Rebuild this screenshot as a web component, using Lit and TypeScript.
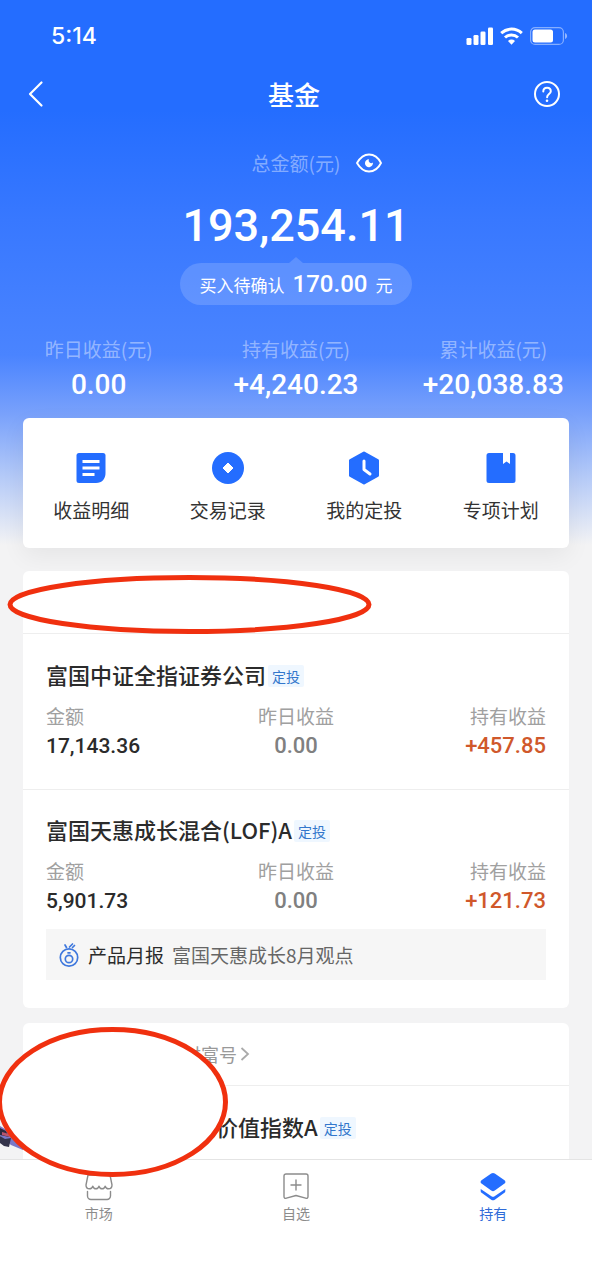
import { LitElement, html, css, svg, nothing } from "lit";
import { customElement, property } from "lit/decorators.js";

interface Fund {
  name: string;
  amount: string;
  yesterday: string;
  holding: string;
  report?: string;
}

const stats = [
  { label: "昨日收益(元)", value: "0.00" },
  { label: "持有收益(元)", value: "+4,240.23" },
  { label: "累计收益(元)", value: "+20,038.83" },
];

const shortcuts = [
  {
    label: "收益明细",
    icon: svg`<path fill="#246dff" d="M6 3h24a2.500 2.500 0 0 1 2.500 2.500V23c0 6-3.500 10-9.500 10H6a2.500 2.500 0 0 1-2.500-2.500v-25A2.500 2.500 0 0 1 6 3z"/><path stroke="#fff" stroke-width="2.800" d="M9.500 11.500h17M9.500 18h17M9.500 24.500h12"/>`,
  },
  {
    label: "交易记录",
    icon: svg`<circle cx="18" cy="18" r="16" fill="#246dff"/><path fill="#fff" stroke="#fff" stroke-width="1" stroke-linejoin="round" d="M18 13l5 5-5 5-5-5z"/>`,
  },
  {
    label: "我的定投",
    icon: svg`<path fill="#246dff" stroke="#246dff" stroke-width="3" stroke-linejoin="round" d="M18 3l13.500 7.500v15L18 33 4.500 25.500v-15z"/><path fill="none" stroke="#fff" stroke-width="3" stroke-linecap="round" stroke-linejoin="round" d="M18 11v8.500l6 4.500"/>`,
  },
  {
    label: "专项计划",
    icon: svg`<path fill="#246dff" d="M6 3h14v11l3.500-2.500L27 14V3h3a2.500 2.500 0 0 1 2.500 2.500v25A2.500 2.500 0 0 1 30 33H6a2.500 2.500 0 0 1-2.500-2.500v-25A2.500 2.500 0 0 1 6 3z"/>`,
  },
];

const funds: Fund[] = [
  { name: "富国中证全指证券公司", amount: "17,143.36", yesterday: "0.00", holding: "+457.85" },
  {
    name: "富国天惠成长混合(LOF)A",
    amount: "5,901.73",
    yesterday: "0.00",
    holding: "+121.73",
    report: "富国天惠成长8月观点",
  },
];

const tabs = [
  {
    label: "市场",
    active: false,
    icon: svg`<g fill="none" stroke="#8c8c8c" stroke-width="1.400" stroke-linecap="round" stroke-linejoin="round"><path d="M3 2h22l2 10c0 2.600-1.800 3.800-3.500 3.800s-2.800-1-3.300-2.600c-.5 1.600-1.600 2.600-3.100 2.600s-2.600-1-3.100-2.600c-.5 1.600-1.600 2.600-3.100 2.600s-2.600-1-3.100-2.600c-.5 1.600-1.600 2.600-3.300 2.600S1 14.600 1 12z"/><path d="M2.500 18.500V23a3.500 3.500 0 0 0 3.500 3.500h16a3.500 3.500 0 0 0 3.500-3.500v-4.500"/></g>`,
  },
  {
    label: "自选",
    active: false,
    icon: svg`<g fill="none" stroke="#8c8c8c" stroke-width="1.400" stroke-linecap="round" stroke-linejoin="round"><path d="M4 1h20a2 2 0 0 1 2 2v20.500c0 1.500-1 2.200-2.400 1.700L14 22.500l-9.600 2.700C3 25.700 2 25 2 23.500V3a2 2 0 0 1 2-2z"/><path d="M14 7v10M9 12h10"/></g>`,
  },
  {
    label: "持有",
    active: true,
    icon: svg`<path fill="#246dff" d="M12.200.6a3.500 3.500 0 0 1 3.600 0l9.700 6.600c1.200.8 1.200 2.600 0 3.400l-9.700 7a3.500 3.500 0 0 1-3.600 0l-9.700-7c-1.200-.8-1.200-2.600 0-3.400z"/><path fill="#246dff" d="M1.700 16v2.200c0 .7.300 1.200.9 1.600l9.600 6.900a3.200 3.200 0 0 0 3.600 0l9.600-6.900c.6-.4.9-.9.9-1.600V16L15.600 23.200a2.900 2.900 0 0 1-3.200 0z"/>`,
  },
];

const shared = css`
  :host {
    display: block;
  }
  svg {
    display: block;
    flex: none;
  }
  .title-row {
    display: flex;
    align-items: center;
    gap: 2px;
    height: 30px;
  }
  .name {
    align-self: flex-start;
    margin: 0;
    font-size: 22px;
    line-height: 26px;
    font-weight: 500;
    color: #2b2b2b;
    white-space: nowrap;
  }
  .tag {
    padding: 0 4px;
    border-radius: 2px;
    background: #eff7ff;
    color: #3377cc;
    font-size: 14px;
    line-height: 22px;
  }
`;

@customElement("fund-item")
export class FundItem extends LitElement {
  @property({ attribute: false }) fund!: Fund;

  static styles = [
    shared,
    css`
      .figures {
        display: grid;
        grid-template-columns: 1fr 1fr 1fr;
        margin: 12px 0 0;
      }
      .figure {
        display: flex;
        flex-direction: column;
        gap: 2px;
      }
      .figure:nth-child(2) {
        align-items: center;
      }
      .figure:nth-child(3) {
        align-items: flex-end;
      }
      dt {
        font-size: 19px;
        line-height: 26px;
        color: #a0a0a0;
      }
      dd {
        margin: 0;
        font-family: Roboto, "Noto Sans CJK SC", sans-serif;
        font-size: 22px;
        line-height: 30px;
        font-weight: 500;
        color: #d0582b;
      }
      .amount {
        font-size: 21px;
        color: #2b2b2b;
      }
      .quiet {
        color: #808080;
      }
      .report {
        display: flex;
        align-items: center;
        height: 51px;
        margin-top: 13px;
        padding: 0 12px;
        background: #f6f6f6;
        font-size: 19px;
        line-height: 26px;
        color: #666;
        text-decoration: none;
        white-space: nowrap;
      }
      .report b {
        margin: 0 8px;
        font-weight: 400;
        color: #2b2b2b;
      }
    `,
  ];

  render() {
    const f = this.fund;
    return html`
      <div class="title-row">
        <h2 class="name">${f.name}</h2>
        <span class="tag">定投</span>
      </div>
      <dl class="figures">
        <div class="figure"><dt>金额</dt><dd class="amount">${f.amount}</dd></div>
        <div class="figure"><dt>昨日收益</dt><dd class="quiet">${f.yesterday}</dd></div>
        <div class="figure"><dt>持有收益</dt><dd>${f.holding}</dd></div>
      </dl>
      ${f.report
        ? html`<a class="report" href="#report">
            <svg width="22" height="26" viewBox="0 0 22 26" fill="none" stroke="#3f78dd" stroke-width="1.700" stroke-linecap="round">
              <circle cx="11" cy="15.500" r="8.700" />
              <circle cx="11" cy="17" r="3.700" />
              <path d="M10 10.800h2M8.500 5.500L7 3M11.500 5l3-3M14.500 5.500l2-2" />
            </svg>
            <b>产品月报</b><span>${f.report}</span>
          </a>`
        : nothing}
    `;
  }
}

@customElement("app-root")
export class AppRoot extends LitElement {
  static styles = [
    shared,
    css`
      :host {
        position: relative;
        display: flex;
        flex-direction: column;
        height: 100vh;
        overflow: hidden;
        background: #f3f3f4;
        font-family: "Noto Sans CJK SC", sans-serif;
        color: #333;
      }
      button {
        padding: 0;
        border: 0;
        background: none;
        font: inherit;
        color: inherit;
      }
      .page {
        flex: 1;
        min-height: 0;
        overflow: hidden;
        background: linear-gradient(
            #246dff 0,
            #246dff 110px,
            #3878ff 220px,
            #4a84ff 355px,
            #7aa2fb 415px,
            #b3c9f8 475px,
            #f3f3f4 545px
          )
          no-repeat;
      }
      .status {
        display: flex;
        align-items: center;
        justify-content: space-between;
        height: 72px;
        padding: 0 24px 0 51px;
        color: #fff;
        font-family: Inter, sans-serif;
        font-size: 23px;
        font-weight: 500;
      }
      .nav {
        display: flex;
        align-items: center;
        justify-content: space-between;
        height: 44px;
        padding: 0 31px 0 27px;
        color: #fff;
      }
      .nav h1 {
        margin: 0;
        font-size: 26px;
        line-height: 36px;
        font-weight: 500;
      }
      .nav-button {
        display: flex;
        width: 28px;
      }
      .total {
        display: grid;
        grid-template-columns: 1fr auto 1fr;
        align-items: center;
        gap: 16px;
        height: 26px;
        margin-top: 34px;
      }
      .label {
        font-size: 19px;
        line-height: 26px;
        color: rgba(255, 255, 255, 0.42);
      }
      .total .label {
        grid-column: 2;
      }
      .sum {
        margin: 22px 0 0;
        text-align: center;
        font-family: Roboto, sans-serif;
        font-size: 45px;
        line-height: 56px;
        font-weight: 500;
        color: #fff;
      }
      .pending {
        position: relative;
        display: flex;
        align-items: center;
        justify-content: center;
        gap: 8px;
        width: fit-content;
        height: 42px;
        margin: 9px auto 0;
        padding: 0 20px;
        border-radius: 21px;
        background: rgba(255, 255, 255, 0.16);
        color: #fff;
        font-size: 17px;
      }
      .pending::before {
        content: "";
        position: absolute;
        left: 50%;
        bottom: 100%;
        margin-left: -7px;
        border: 7px solid transparent;
        border-top: 0;
        border-bottom: 6px solid rgba(255, 255, 255, 0.16);
      }
      .pending strong {
        font-family: Roboto, sans-serif;
        font-size: 24px;
        font-weight: 500;
      }
      .stats {
        display: grid;
        grid-template-columns: repeat(3, 1fr);
        margin: 31px 0 17px;
        text-align: center;
      }
      .stats dd {
        margin: 7px 0 0;
        font-family: Roboto, sans-serif;
        font-size: 28px;
        line-height: 32px;
        font-weight: 500;
        color: #fff;
      }
      .card {
        margin: 0 23px 15px;
        border-radius: 6px;
        background: #fff;
      }
      .shortcuts {
        display: grid;
        grid-template-columns: repeat(4, 1fr);
        margin-bottom: 23px;
        padding: 32px 0 25px;
        box-shadow: 0 8px 24px rgba(0, 0, 0, 0.06);
      }
      .shortcut {
        display: flex;
        flex-direction: column;
        align-items: center;
        gap: 11px;
        font-size: 19px;
        line-height: 26px;
        color: #333;
      }
      .card-head {
        display: flex;
        align-items: center;
        box-sizing: border-box;
        height: 63px;
        padding: 0 23px;
        border-bottom: 1px solid #eee;
      }
      .entry {
        padding: 27px 23px 28px;
      }
      .entry + .entry {
        border-top: 1px solid #eee;
        padding-top: 26px;
      }
      .source {
        display: flex;
        align-items: center;
        gap: 3px;
        margin-left: 137px;
        font-size: 18px;
        line-height: 26px;
        color: #999;
        text-decoration: none;
      }
      .covered {
        padding-left: 170px;
      }
      .tabs {
        display: grid;
        grid-template-columns: repeat(3, 1fr);
        box-sizing: border-box;
        height: 121px;
        padding-top: 13px;
        border-top: 1px solid #e4e4e4;
        background: #fff;
      }
      .tab {
        display: flex;
        flex-direction: column;
        align-items: center;
        gap: 2px;
        font-size: 14px;
        line-height: 20px;
        color: #8c8c8c;
        text-decoration: none;
      }
      .tab.active {
        color: #2f6bd8;
      }
      .marks {
        position: absolute;
        left: 0;
        top: 0;
      }
    `,
  ];

  render() {
    return html`
      <main class="page">
        <div class="status">
          <span>5:14</span>
          <svg width="102" height="20" viewBox="0 0 102 20" fill="#fff">
            <rect x="0.500" y="12" width="5" height="7" rx="1.300" />
            <rect x="7.500" y="9" width="5" height="10" rx="1.300" />
            <rect x="14.500" y="5.500" width="5" height="13.500" rx="1.300" />
            <rect x="22" y="1.500" width="5" height="17.500" rx="1.300" />
            <g fill="none" stroke="#fff" stroke-width="3">
              <path d="M35.200 7.200a15 15 0 0 1 20.600 0" />
              <path d="M39 11.500a9.500 9.500 0 0 1 13 0" />
            </g>
            <path d="M42 15a5 5 0 0 1 7 0l-3.500 3.800z" />
            <rect x="64.600" y="1.600" width="32.800" height="16.800" rx="4.500" fill="none" stroke="#fff" stroke-opacity=".45" stroke-width="1.200" />
            <rect x="66.500" y="3.500" width="20.500" height="13" rx="2.500" />
            <path fill-opacity=".5" d="M99 7c2.800.8 2.800 5.200 0 6z" />
          </svg>
        </div>

        <header class="nav">
          <button class="nav-button" aria-label="返回">
            <svg width="18" height="28" viewBox="0 0 18 28" fill="none" stroke="#fff" stroke-width="2.200" stroke-linecap="round" stroke-linejoin="round"><path d="M14.500 2.500L3 14l11.500 11.500" /></svg>
          </button>
          <h1>基金</h1>
          <button class="nav-button" aria-label="帮助">
            <svg width="28" height="28" viewBox="0 0 28 28" fill="none" stroke="#fff" stroke-width="2" stroke-linecap="round">
              <circle cx="14" cy="14" r="12" />
              <path d="M10.300 11.500c0-2.300 1.600-3.800 3.800-3.800s3.700 1.500 3.700 3.500c0 2.800-3.700 3-3.700 6" />
              <circle cx="14" cy="20.800" r="1.300" fill="#fff" stroke="none" />
            </svg>
          </button>
        </header>

        <section>
          <div class="total">
            <span class="label">总金额(元)</span>
            <button class="nav-button" aria-label="隐藏金额">
              <svg width="28" height="22" viewBox="0 0 28 22" fill="none" stroke="#fff" stroke-width="1.900" stroke-linejoin="round">
                <path d="M1 11C4.500 5 8 2.500 13 2.500S22 5 25 11C22 17 18 19.500 13 19.500S4.500 17 1 11z" />
                <path fill="#fff" stroke="none" d="M13 7.200a2.600 2.600 0 0 0 3.900 3.300A4 4 0 1 1 13 7.200z" />
              </svg>
            </button>
          </div>
          <p class="sum">193,254.11</p>
          <div class="pending"><span>买入待确认</span><strong>170.00</strong><span>元</span></div>
          <dl class="stats">
            ${stats.map((s) => html`<div><dt class="label">${s.label}</dt><dd>${s.value}</dd></div>`)}
          </dl>
        </section>

        <nav class="card shortcuts">
          ${shortcuts.map(
            (s) => html`<button class="shortcut"><svg width="36" height="36" viewBox="0 0 36 36" fill="none">${s.icon}</svg>${s.label}</button>`
          )}
        </nav>

        <section class="card">
          <div class="card-head"></div>
          ${funds.map((f) => html`<div class="entry"><fund-item .fund=${f}></fund-item></div>`)}
        </section>

        <section class="card">
          <div class="card-head">
            <a class="source" href="#wealth">财富号
              <svg width="10" height="14" viewBox="0 0 10 14" fill="none" stroke="#aaa" stroke-width="1.800"><path d="M1.500 1l6.500 6-6.500 6" /></svg>
            </a>
          </div>
          <div class="entry">
            <div class="title-row covered"><h2 class="name">价值指数A</h2><span class="tag">定投</span></div>
          </div>
        </section>
      </main>

      <nav class="tabs">
        ${tabs.map(
          (t) => html`<a class="tab ${t.active ? "active" : ""}" href="#tab"><svg width="28" height="28" viewBox="0 0 28 28">${t.icon}</svg>${t.label}</a>`
        )}
      </nav>

      <svg class="marks" width="400" height="1200" viewBox="0 0 400 1200" pointer-events="none" aria-hidden="true">
        <path fill="#7a78c8" d="M0 1126l10 6 13 14v4l-12-5L0 1136z" />
        <path fill="#2c2a3e" d="M0 1128l6 3 3 6-9-2z" />
        <path fill="#b8556e" d="M2 1132l7 2 1 3-8-2z" />
        <path fill="#33334a" d="M0 1136l5 3 6-1-2 9-5-1-4-3z" />
        <g fill="#fff" stroke="#f0300f" stroke-width="5">
          <ellipse cx="189.500" cy="604.500" rx="179.500" ry="27" />
          <ellipse cx="112.500" cy="1102" rx="113" ry="72.500" />
        </g>
      </svg>
    `;
  }
}
